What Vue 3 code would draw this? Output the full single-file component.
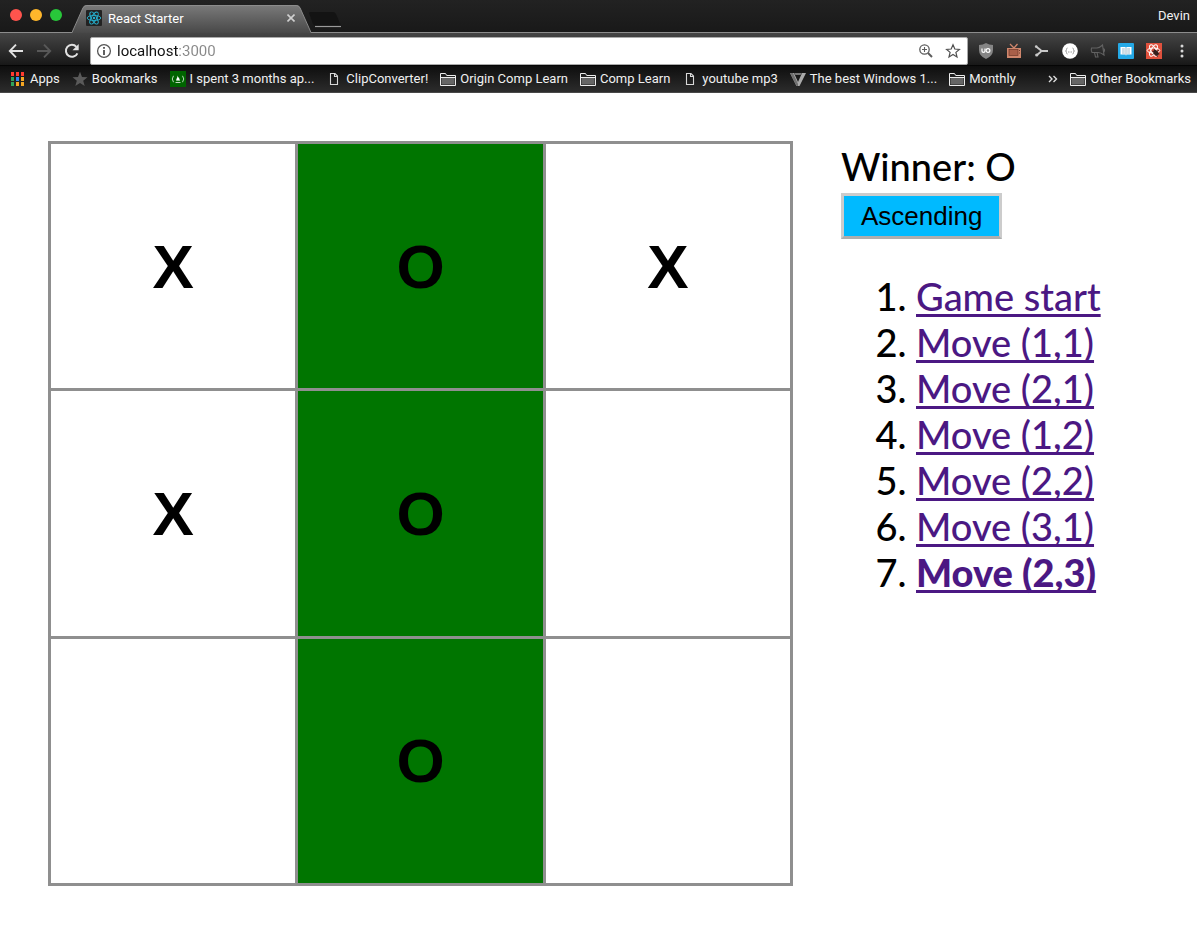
<script setup>
import { ref } from 'vue'

const address = ref('localhost:3000')
const bookmarks = [
  { icon: 'apps', label: 'Apps' },
  { icon: 'star', label: 'Bookmarks' },
  { icon: 'camp', label: 'I spent 3 months ap...' },
  { icon: 'doc', label: 'ClipConverter!' },
  { icon: 'folder', label: 'Origin Comp Learn' },
  { icon: 'folder', label: 'Comp Learn' },
  { icon: 'doc', label: 'youtube mp3' },
  { icon: 'vee', label: 'The best Windows 1...' },
  { icon: 'folder', label: 'Monthly' },
  { icon: 'folder', label: 'Other Bookmarks', last: true },
]
const appColors = ['#ff3b30', '#ff3b30', '#ff3b30', '#2fa35a', '#2e86f0', '#f5a623', '#2fa35a', '#f5a623', '#f5a623']
const squares = ['X', 'O', 'X', 'X', 'O', '', '', 'O', '']
const winning = [1, 4, 7]
const moves = ['Game start', 'Move (1,1)', 'Move (2,1)', 'Move (1,2)', 'Move (2,2)', 'Move (3,1)', 'Move (2,3)']
</script>

<template>
  <div class="window">
    <header class="chrome">
      <div class="titlebar">
        <div class="lights">
          <button class="light red" aria-label="Close window"></button>
          <button class="light yellow" aria-label="Minimize window"></button>
          <button class="light green" aria-label="Zoom window"></button>
        </div>
        <div class="tab">
          <svg class="tab-shape" viewBox="0 0 242 28" preserveAspectRatio="none" aria-hidden="true">
            <defs>
              <linearGradient id="tabFill" x1="0" y1="0" x2="0" y2="1">
                <stop offset="0" stop-color="#7a7a7a" />
                <stop offset="1" stop-color="#484848" />
              </linearGradient>
            </defs>
            <path d="M0 28 L11 3 Q12 0 15 0 H226 Q229 0 230 3 L241 28 Z" fill="url(#tabFill)" />
            <path d="M0 27.5 L11 3 Q12 .5 15 .5 H226 Q229 .5 230 3 L241 27.5" fill="none" stroke="#8c8c8c" />
          </svg>
          <svg class="icon16 over" viewBox="0 0 16 16" aria-hidden="true">
            <rect width="16" height="16" rx="1" fill="#222" />
            <g fill="none" stroke="#26b3d1" stroke-width=".9">
              <ellipse cx="8" cy="8" rx="6.8" ry="2.6" />
              <ellipse cx="8" cy="8" rx="6.8" ry="2.6" transform="rotate(60 8 8)" />
              <ellipse cx="8" cy="8" rx="6.8" ry="2.6" transform="rotate(120 8 8)" />
            </g>
            <circle cx="8" cy="8" r="1.2" fill="#26b3d1" />
          </svg>
          <span class="tab-title over">React Starter</span>
          <button class="plain over" aria-label="Close tab">
            <svg width="8" height="8" viewBox="0 0 8 8"><path d="M.5 .5 7.5 7.5 M7.5 .5 .5 7.5" stroke="#d0d0d0" stroke-width="1.6" /></svg>
          </button>
        </div>
        <button class="plain newtab" aria-label="New tab">
          <svg width="34" height="16" viewBox="0 0 34 16">
            <path d="M1 1 Q1 0 3 0 H25 Q27 0 28 2 L33 14 H8 Q6 14 5 12 Z" fill="#131313" />
            <path d="M7 14.5 H33" stroke="#9a9a9a" stroke-width="1.2" />
          </svg>
        </button>
        <span class="user">Devin</span>
      </div>

      <div class="toolbar">
        <button class="plain" aria-label="Back">
          <svg width="16" height="16" viewBox="0 0 16 16" fill="none" stroke="#e2e2e2" stroke-width="1.9"><path d="M15 8 H2.5 M8 1.7 1.8 8 8 14.3" /></svg>
        </button>
        <button class="plain" aria-label="Forward">
          <svg width="16" height="16" viewBox="0 0 16 16" fill="none" stroke="#585858" stroke-width="1.9"><path d="M1 8 H13.5 M8 1.7 14.2 8 8 14.3" /></svg>
        </button>
        <button class="plain" aria-label="Reload">
          <svg width="16" height="16" viewBox="0 0 16 16"><path d="M13.4 10.3 A6 6 0 1 1 12.4 3.8" fill="none" stroke="#e2e2e2" stroke-width="2" /><path d="M14.7 1 V7.2 H8.5 Z" fill="#e2e2e2" /></svg>
        </button>
        <div class="omnibox">
          <svg class="icon16" viewBox="0 0 16 16" aria-hidden="true"><circle cx="8" cy="8" r="6.4" fill="none" stroke="#555" stroke-width="1.3" /><path d="M8 7 V12 M8 4 V5.7" stroke="#444" stroke-width="1.7" /></svg>
          <div class="address">
            <input v-model="address" type="text" aria-label="Address" />
          </div>
          <svg class="icon16 magnifier" viewBox="0 0 16 16" fill="none" stroke="#5c5c5c" aria-hidden="true"><circle cx="6.5" cy="6.5" r="4.7" stroke-width="1.3" /><path d="M10 10 14 14" stroke-width="1.9" /><path d="M4 6.5 H9 M6.5 4 V9" stroke-width="1.1" /></svg>
          <button class="plain" aria-label="Bookmark this page">
            <svg width="16" height="16" viewBox="0 0 16 16"><path d="M8 1.8 9.8 6 14.4 6.4 10.9 9.4 12 13.9 8 11.5 4 13.9 5.1 9.4 1.6 6.4 6.2 6 Z" fill="none" stroke="#505050" stroke-width="1.2" /></svg>
          </button>
        </div>
        <div class="extensions">
          <button class="plain" aria-label="Shield extension">
            <svg width="16" height="16" viewBox="0 0 16 16"><path d="M8 0 Q11 2 15 2 V7 Q15 13 8 16 Q1 13 1 7 V2 Q5 2 8 0 Z" fill="#858585" /><path d="M4 5.5 V8 Q4 9.3 5.5 9.3 Q7 9.3 7 8 V5.5" fill="none" stroke="#fff" stroke-width="1.2" /><circle cx="10" cy="7.5" r="1.9" fill="none" stroke="#fff" stroke-width="1.2" /></svg>
          </button>
          <button class="plain" aria-label="Television extension">
            <svg width="16" height="16" viewBox="0 0 16 16"><path d="M4 1 8 5 11.5 1" fill="none" stroke="#cf866c" stroke-width="1.3" /><rect x="1" y="5" width="14" height="10" fill="#cf866c" /><rect x="3" y="6.5" width="9" height="6" fill="#a85f49" stroke="#6d3829" stroke-width=".7" /><path d="M13 7.5 H14 M13 10 H14" stroke="#6d3829" /></svg>
          </button>
          <button class="plain" aria-label="Branch extension">
            <svg width="16" height="16" viewBox="0 0 16 16"><path d="M2 3.5 6.5 7 Q7.5 8 6.5 9 L3 12 M6.5 8 H14" fill="none" stroke="#c9c9c9" stroke-width="1.9" /><circle cx="2.2" cy="3.5" r="1.3" fill="#c9c9c9" /><circle cx="2.7" cy="12" r="1.6" fill="#c9c9c9" /></svg>
          </button>
          <button class="plain" aria-label="JSON extension">
            <svg width="16" height="16" viewBox="0 0 16 16"><circle cx="8" cy="8" r="7.8" fill="#fff" /><path d="M5.5 5 Q4.5 5 4.5 6.5 Q4.5 8 3.5 8 Q4.5 8 4.5 9.5 Q4.5 11 5.5 11 M10.5 5 Q11.5 5 11.5 6.5 Q11.5 8 12.5 8 Q11.5 8 11.5 9.5 Q11.5 11 10.5 11" fill="none" stroke="#999" stroke-width="1" /><path d="M6 9 H10" stroke="#999" stroke-dasharray="1 .5" /></svg>
          </button>
          <button class="plain" aria-label="Announcement extension">
            <svg width="16" height="16" viewBox="0 0 16 16"><path d="M1.5 5 H7 Q10 4.5 12.5 2 L14 12 Q11 9.5 8 9.5 H2 Q.7 7 1.5 5 Z M4.5 9.5 5.5 14 H8 L7 9.5 M13 5.5 Q15.5 6 14 9" fill="none" stroke="#626262" stroke-width="1.1" /></svg>
          </button>
          <button class="plain" aria-label="Reader extension">
            <svg width="16" height="16" viewBox="0 0 16 16"><rect width="16" height="16" rx="1" fill="#24a9e6" /><path d="M2.5 4 H7 L8 4.7 9 4 H13.5 V11.5 H9 L8 12.5 7 11.5 H2.5 Z" fill="#fff" /><path d="M8 5 V12 M4 6 H6.8 M4 8 H6.8 M4 10 H6.8 M9.2 6 H12 M9.2 8 H12 M9.2 10 H12" stroke="#6f9fb4" stroke-width=".7" /></svg>
          </button>
          <button class="plain" aria-label="React inspector extension">
            <svg width="16" height="16" viewBox="0 0 16 16"><rect width="16" height="16" fill="#df513d" /><g fill="none" stroke="#fff" stroke-width="1"><ellipse cx="7.5" cy="7.5" rx="6.3" ry="2.5" /><ellipse cx="7.5" cy="7.5" rx="6.3" ry="2.5" transform="rotate(60 7.5 7.5)" /><ellipse cx="7.5" cy="7.5" rx="6.3" ry="2.5" transform="rotate(120 7.5 7.5)" /></g><ellipse cx="10" cy="9.8" rx="2.2" ry="3.2" transform="rotate(-40 10 9.8)" fill="#35201d" /><path d="M6 8 13.5 11 M8 5.8 11.5 14 M6.5 11.5 13 7" stroke="#35201d" stroke-width=".8" /></svg>
          </button>
          <button class="plain" aria-label="Browser menu">
            <svg width="16" height="16" viewBox="0 0 16 16" fill="#d8d8d8"><circle cx="8" cy="3" r="1.5" /><circle cx="8" cy="8" r="1.5" /><circle cx="8" cy="13" r="1.5" /></svg>
          </button>
        </div>
      </div>

      <nav class="bookmarks" aria-label="Bookmarks">
        <template v-for="b in bookmarks" :key="b.label">
          <button v-if="b.last" class="plain more" aria-label="More bookmarks">
            <svg width="10" height="10" viewBox="0 0 10 10" fill="none" stroke="#dcdcdc" stroke-width="1.4"><path d="M1 2 4 5 1 8 M5.5 2 8.5 5 5.5 8" /></svg>
          </button>
          <a href="#" class="bookmark">
            <svg class="icon16" viewBox="0 0 16 16" aria-hidden="true">
              <template v-if="b.icon === 'apps'">
                <rect v-for="(c, i) in appColors" :key="i" :x="1 + (i % 3) * 5" :y="1 + Math.floor(i / 3) * 5" width="3" height="4" :fill="c" />
              </template>
              <path v-else-if="b.icon === 'star'" d="M8 .8 10 6 15.5 6.3 11.2 9.7 12.7 15 8 12 3.3 15 4.8 9.7 .5 6.3 6 6 Z" fill="#5a5a5a" />
              <template v-else-if="b.icon === 'camp'">
                <rect width="16" height="16" fill="#006400" />
                <path d="M3.5 4.8 Q1 8 3.5 11.2 M12.5 4.8 Q15 8 12.5 11.2" fill="none" stroke="#b9d6b9" stroke-width="1" />
                <path d="M7.5 4.5 Q8 6 9.3 7.5 Q10.5 9.5 9 10.3 L8 9 7 10.3 Q5.5 9.3 6.7 7.5 Q7.8 6 7.5 4.5 Z M5.5 11 H10.5 V11.7 H5.5 Z" fill="#fff" />
              </template>
              <path v-else-if="b.icon === 'doc'" d="M4.5 2.5 H9 L11.5 5 V13.5 H4.5 Z M8.5 2.5 V5.5 H11.5" fill="none" stroke="#d8d8d8" stroke-width="1.1" />
              <template v-else-if="b.icon === 'folder'">
                <path d="M.5 14.5 V2.5 H5.5 L6.7 4.5 H15.5 V14.5 Z" fill="#222" stroke="#ededed" />
                <path d="M1.5 7 H14.5 V13.5 H1.5 Z" fill="#666" />
                <path d="M.5 6.5 H15.5" stroke="#ededed" />
              </template>
              <template v-else>
                <path d="M0 2 H4 L8 11 12 2 H16 L9.5 15 H6.5 Z" fill="#aaa" />
                <path d="M4 2 H12 L10.5 4 H5.5 Z" fill="#777" />
                <path d="M0 2 H3 L8 13 V15 H6.5 Z" fill="#707070" />
              </template>
            </svg>
            <span>{{ b.label }}</span>
          </a>
        </template>
      </nav>
    </header>

    <main class="game">
      <div class="board">
        <button
          v-for="(s, i) in squares"
          :key="i"
          class="square"
          :class="{ won: winning.includes(i) }"
          :aria-label="s ? null : 'Empty square'"
        >{{ s }}</button>
      </div>
      <section class="info">
        <div class="status">Winner: O</div>
        <button class="sort">Ascending</button>
        <ol class="moves">
          <li v-for="(m, i) in moves" :key="m">
            <a href="#" :class="{ current: i === moves.length - 1 }">{{ m }}</a>
          </li>
        </ol>
      </section>
    </main>
  </div>
</template>

<style>
body {
  margin: 0;
  background: #fff;
}
</style>

<style scoped>
.window {
  min-height: 100vh;
  background: #fff;
  color: #000;
}
.chrome {
  color: #f0f0f0;
  font-family: Roboto, "Liberation Sans", sans-serif;
  font-size: 13px;
}
.plain {
  display: flex;
  flex: none;
  padding: 0;
  border: 0;
  background: none;
}
.icon16 {
  flex: none;
  width: 16px;
  height: 16px;
}
.titlebar {
  display: flex;
  box-sizing: border-box;
  height: 33px;
  background: linear-gradient(#222, #191919);
  border-bottom: 1px solid #8c8c8c;
}
.lights {
  display: flex;
  gap: 8px;
  padding: 9px 10px 0;
}
.light {
  width: 12px;
  height: 12px;
  padding: 0;
  border: 0;
  border-radius: 50%;
}
.red { background: #ff544d; }
.yellow { background: #ffb72b; }
.green { background: #28c73a; }
.tab {
  position: relative;
  display: flex;
  align-items: center;
  box-sizing: border-box;
  width: 240px;
  height: 28px;
  margin-top: 5px;
  padding: 0 17px 2px 14px;
  gap: 6px;
}
.tab-shape {
  position: absolute;
  inset: 0;
  width: 100%;
  height: 100%;
}
.over {
  position: relative;
}
.tab-title {
  flex: 1;
  color: #fff;
}
.newtab {
  margin: 12px 0 0 -4px;
  align-self: flex-start;
}
.user {
  margin-left: auto;
  padding: 0 7px 0 0;
  line-height: 32px;
}
.toolbar {
  display: flex;
  align-items: center;
  box-sizing: border-box;
  height: 32px;
  padding: 4px 7px 0 8px;
  gap: 12px;
  background: linear-gradient(#454545, #181818);
}
.omnibox {
  display: flex;
  flex: 1;
  align-items: center;
  box-sizing: border-box;
  height: 28px;
  margin-left: -2px;
  padding: 0 6px 0 5px;
  gap: 11px;
  border: 1px solid #aaa;
  border-radius: 2px;
  background: #fff;
}
.address {
  flex: 1;
  margin-left: -6px;
}
.address input {
  box-sizing: border-box;
  width: 100%;
  padding: 0;
  border: 0;
  outline: 0;
  background: linear-gradient(90deg, #111 61px, #888 61px);
  background-clip: text;
  color: transparent;
  font-family: Roboto, "Liberation Sans", sans-serif;
  font-size: 15px;
}
.extensions {
  display: flex;
  gap: 12px;
  margin-left: -2px;
}
.bookmarks {
  display: flex;
  align-items: center;
  box-sizing: border-box;
  height: 28px;
  padding: 0 6px 1px 10px;
  gap: 12px;
  border-top: 1px solid #050505;
  border-bottom: 1px solid #484848;
  background: linear-gradient(#0e0e0e, #2c2c2c);
}
.bookmark {
  display: flex;
  align-items: center;
  gap: 4px;
  color: #f0f0f0;
  text-decoration: none;
  white-space: nowrap;
}
.more {
  margin-left: auto;
}
.game {
  display: flex;
  align-items: flex-start;
  gap: 48px;
  padding: 48px;
}
.board {
  display: grid;
  flex: 1;
  grid-template: repeat(3, 1fr) / repeat(3, 1fr);
  box-sizing: border-box;
  aspect-ratio: 1;
  gap: 3px;
  padding: 3px;
  background: #8f8f8f;
}
.square {
  min-width: 0;
  padding: 0;
  border: 0;
  background: #fff;
  color: #000;
  font: bold 62px "Liberation Sans", Arial, sans-serif;
}
.square.won {
  background: #007500;
}
.info {
  flex: 0 0 308px;
  padding-top: 2px;
  font-family: Futura, Lato, sans-serif;
  font-size: 38px;
  font-weight: 500;
  line-height: 46px;
}
.sort {
  display: block;
  box-sizing: border-box;
  height: 46px;
  margin-top: 4px;
  padding: 0 17px;
  border: 3px solid #ccc;
  border-bottom-color: #aeaeae;
  background: #00baff;
  color: #000;
  font: 26px "Liberation Sans", Arial, sans-serif;
}
.moves {
  margin: 34px 0 0;
  padding-left: 75px;
}
.moves a {
  color: #4b1883;
  text-decoration-thickness: 3px;
  text-underline-offset: 3px;
  text-decoration-skip-ink: none;
  white-space: nowrap;
}
.moves .current {
  font-weight: 900;
}
</style>
